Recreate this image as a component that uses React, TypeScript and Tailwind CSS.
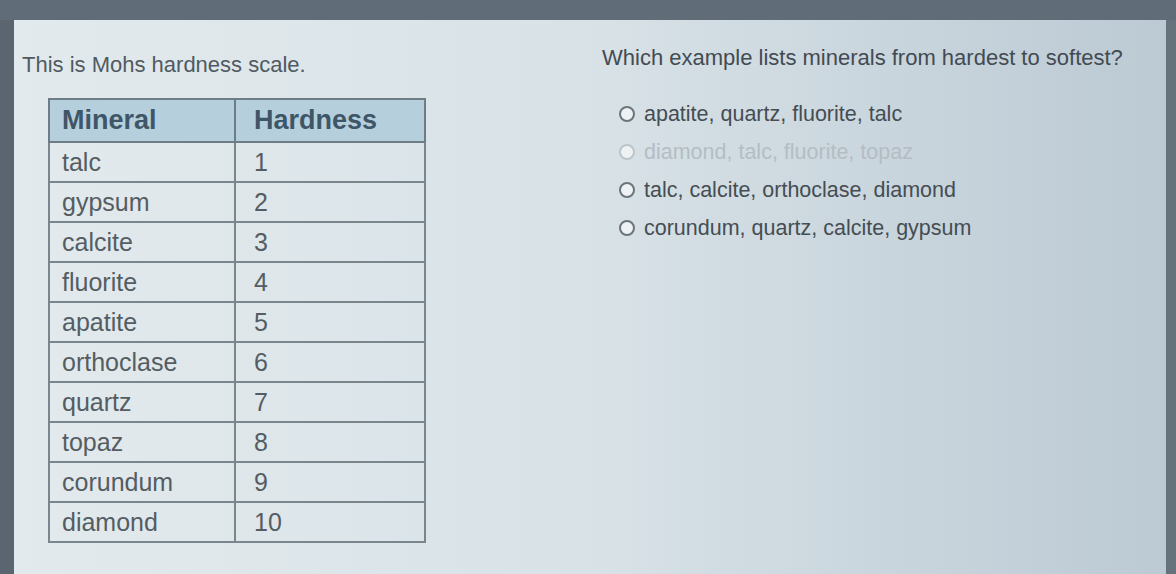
import { useState } from 'react';

const minerals: [string, string][] = [
  ['talc', '1'],
  ['gypsum', '2'],
  ['calcite', '3'],
  ['fluorite', '4'],
  ['apatite', '5'],
  ['orthoclase', '6'],
  ['quartz', '7'],
  ['topaz', '8'],
  ['corundum', '9'],
  ['diamond', '10'],
];

const options = [
  'apatite, quartz, fluorite, talc',
  'diamond, talc, fluorite, topaz',
  'talc, calcite, orthoclase, diamond',
  'corundum, quartz, calcite, gypsum',
];

export default function App() {
  const [picked, setPicked] = useState<number | null>(null);

  return (
    <div className="w-[1176px] h-[574px] overflow-hidden flex flex-col bg-[#5e6a75] font-['Liberation_Sans',Arial,sans-serif]">
      <div className="h-[20px] shrink-0 bg-[#606d79]" />
      <div className="flex-1 flex">
        <div className="w-[14px] shrink-0 bg-[#5a6570]" />
        <div className="flex-1 flex bg-gradient-to-r from-[#e3eaed] via-[#d8e2e7] to-[#bccad4]">
          {/* left: table */}
          <div className="w-[575px] shrink-0 pl-[8px] pt-[32px]">
            <p className="text-[22px] text-[#4f5a62] leading-[26px]">This is Mohs hardness scale.</p>
            <table className="mt-[20px] ml-[26px] w-[378px] border-collapse border-2 border-[#6e7c86] text-[#545d63]">
              <thead>
                <tr className="bg-[#b5cfdd] h-[43px]">
                  <th className="w-[186px] border-2 border-[#6e7c86] text-left pl-[12px] text-[27px] font-bold text-[#3f5667]">Mineral</th>
                  <th className="border-2 border-[#6e7c86] text-left pl-[18px] text-[27px] font-bold text-[#3f5667]">Hardness</th>
                </tr>
              </thead>
              <tbody>
                {minerals.map(([name, h]) => (
                  <tr key={name} className="h-[40px]">
                    <td className="border-2 border-[#7a868e] pl-[12px] text-[25px] leading-[30px]">{name}</td>
                    <td className="border-2 border-[#7a868e] pl-[18px] text-[25px] leading-[30px]">{h}</td>
                  </tr>
                ))}
              </tbody>
            </table>
          </div>

          {/* right: question */}
          <div className="flex-1 pt-[25px] pl-[13px]">
            <p className="text-[22px] text-[#434b52] leading-[26px]">Which example lists minerals from hardest to softest?</p>
            <div className="mt-[30px] pl-[17px] flex flex-col gap-[12px]">
              {options.map((opt, i) => {
                const faded = i === 1;
                return (
                  <label
                    key={opt}
                    onClick={() => setPicked(i)}
                    className={`flex items-center gap-[9px] h-[26px] cursor-pointer ${faded ? 'text-[#b4bdc3]' : 'text-[#454d53]'}`}
                  >
                    <span
                      className={`w-[16px] h-[16px] rounded-full border-2 flex items-center justify-center ${faded ? 'border-[#bcc5ca]' : 'border-[#6c757b]'} bg-[#eef2f4]`}
                    >
                      {picked === i && <span className="w-[8px] h-[8px] rounded-full bg-[#4a5258]" />}
                    </span>
                    <span className="text-[21.5px]">{opt}</span>
                  </label>
                );
              })}
            </div>
          </div>
        </div>
        <div className="w-[10px] shrink-0 bg-[#66727c]" />
      </div>
    </div>
  );
}
